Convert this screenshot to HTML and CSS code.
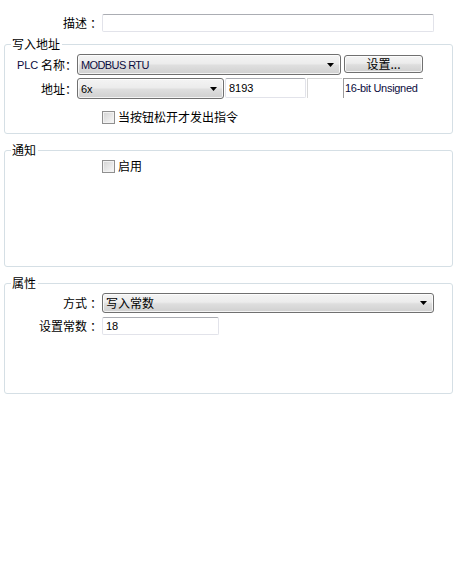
FILE: index.html
```html
<!DOCTYPE html>
<html lang="zh">
<head>
<meta charset="utf-8">
<title>写入地址</title>
<link rel="stylesheet" href="styles.css">
</head>
<body>
<div class="desc-row">
  <div class="label wide"><span>描述</span><span class="colon sp">：</span></div>
  <div class="textbox desc-input"></div>
</div>

<fieldset class="group g1">
  <legend>写入地址</legend>
  <div class="row r1">
    <div class="label narrow"><span class="latin navy">PLC</span><span>&nbsp;名称</span><span class="colon">：</span></div>
    <div class="combo plc"><span class="latin navy tight">MODBUS RTU</span><svg class="arrow" width="7" height="4" viewBox="0 0 7 4"><path d="M0 0H7L3.5 4Z" fill="#000"/></svg></div>
    <div class="button setbtn">设置...</div>
  </div>
  <div class="row r2">
    <div class="label narrow"><span>地址</span><span class="colon">：</span></div>
    <div class="combo addr"><span class="latin">6x</span><svg class="arrow" width="7" height="4" viewBox="0 0 7 4"><path d="M0 0H7L3.5 4Z" fill="#000"/></svg></div>
    <div class="textbox num"><span class="latin">8193</span></div>
    <div class="sunken blank"></div>
    <div class="sunken dtype"><span class="latin navy semi">16-bit Unsigned</span></div>
  </div>
  <div class="row check-row r3">
    <span class="checkbox"></span><span class="check-text">当按钮松开才发出指令</span>
  </div>
</fieldset>

<fieldset class="group g2">
  <legend>通知</legend>
  <div class="row check-row r4">
    <span class="checkbox"></span><span class="check-text">启用</span>
  </div>
</fieldset>

<fieldset class="group g3">
  <legend>属性</legend>
  <div class="row r5">
    <div class="label mid"><span>方式</span><span class="colon sp">：</span></div>
    <div class="combo mode"><span>写入常数</span><svg class="arrow" width="7" height="4" viewBox="0 0 7 4"><path d="M0 0H7L3.5 4Z" fill="#000"/></svg></div>
  </div>
  <div class="row r6">
    <div class="label mid"><span>设置常数</span><span class="colon sp">：</span></div>
    <div class="textbox constv"><span class="latin">18</span></div>
  </div>
</fieldset>
</body>
</html>
```

FILE: styles.css
```css
html, body {
  margin: 0;
  padding: 0;
  background: #ffffff;
}
body {
  width: 456px;
  height: 579px;
  font-family: "Noto Sans CJK SC", "Noto Sans", sans-serif;
  font-size: 12px;
  line-height: 14px;
  color: #000;
}
.latin {
  font-family: "Liberation Sans", Arial, sans-serif;
  font-size: 11px;
}
.tight { letter-spacing: -0.6px; }
.semi { letter-spacing: -0.3px; }
.navy { color: #0c0c40; }

.desc-row {
  display: flex;
  align-items: center;
  padding-top: 14px;
  height: 18px;
}
.label {
  display: flex;
  justify-content: flex-end;
  align-items: center;
  flex: none;
  white-space: nowrap;
}
.label.wide { width: 102px; }
.label.narrow { width: 72px; }
.label.mid { width: 97px; }
.colon {
  display: inline-block;
  width: 12px;
  text-align: center;
}
.colon.sp { margin-left: 3px; }

.textbox {
  box-sizing: border-box;
  border: 1px solid #e2e3ea;
  border-top-color: #abadb3;
  border-radius: 2px;
  background: #fff;
  display: flex;
  align-items: center;
  padding-left: 3px;
  flex: none;
}
.desc-input { width: 332px; height: 18px; }

.group {
  margin: 5px 3px 0 4px;
  padding: 0;
  min-width: 0;
  border: 1px solid #d5dfe5;
  border-radius: 3px;
}
.group legend {
  margin-left: 6px;
  padding: 0 2px 0 1px;
  line-height: 14px;
  font-size: 12px;
}
.g2, .g3 { margin-top: 9px; }

.row {
  display: flex;
  align-items: flex-start;
}
.r1 { margin-top: 3px; }
.r2 { margin-top: 3px; }
.r3 { margin-top: 11px; margin-bottom: 9px; }
.r4 { margin-top: 2px; margin-bottom: 93px; }
.r5 { margin-top: 3px; align-items: center; }
.r6 { margin-top: 4px; margin-bottom: 58px; align-items: center; }
.r1 .label, .r2 .label { height: 21px; }

.combo {
  box-sizing: border-box;
  flex: none;
  display: flex;
  align-items: center;
  justify-content: space-between;
  padding: 0 6px 0 3px;
  border: 1px solid #707070;
  border-radius: 3px;
  background: linear-gradient(#f4f4f4, #ececec 45%, #dedede 55%, #d0d0d0);
  box-shadow: inset 0 0 0 1px rgba(255, 255, 255, 0.75);
  white-space: nowrap;
}
.combo .arrow { flex: none; }
.plc { width: 264px; height: 21px; }
.addr { width: 147px; height: 21px; }
.mode { width: 332px; height: 20px; }

.button {
  box-sizing: border-box;
  flex: none;
  display: flex;
  align-items: center;
  justify-content: center;
  border: 1px solid #707070;
  border-radius: 3px;
  background: linear-gradient(#f4f4f4, #ececec 45%, #dedede 55%, #d0d0d0);
  box-shadow: inset 0 0 0 1px rgba(255, 255, 255, 0.75);
  white-space: nowrap;
}
.setbtn {
  width: 79px;
  height: 18px;
  margin-left: 3px;
  margin-top: 1px;
}

.num { width: 81px; height: 20px; margin-left: 1px; }
.sunken {
  box-sizing: border-box;
  flex: none;
  height: 20px;
  margin-left: 1px;
  background: #fff;
  border-top: 1px solid #b4b4b4;
  border-left: 1px solid #b4b4b4;
}
.blank { width: 35px; border-color: #d8d8d8; }
.dtype {
  width: 80px;
  margin-left: 1px;
  border-color: #9c9c9c;
  padding: 1px 0 0 1px;
  line-height: 14px;
  white-space: nowrap;
}

.constv { width: 117px; height: 18px; }

.check-row {
  align-items: center;
  height: 14px;
  padding-left: 97px;
}
.checkbox {
  box-sizing: border-box;
  flex: none;
  width: 13px;
  height: 13px;
  border: 1px solid #8f8f8f;
  background: linear-gradient(135deg, #d3d3d3, #f9f9f9);
  box-shadow: inset 0 0 0 1px #f2f2f2;
}
.check-text { margin-left: 3px; }
```
